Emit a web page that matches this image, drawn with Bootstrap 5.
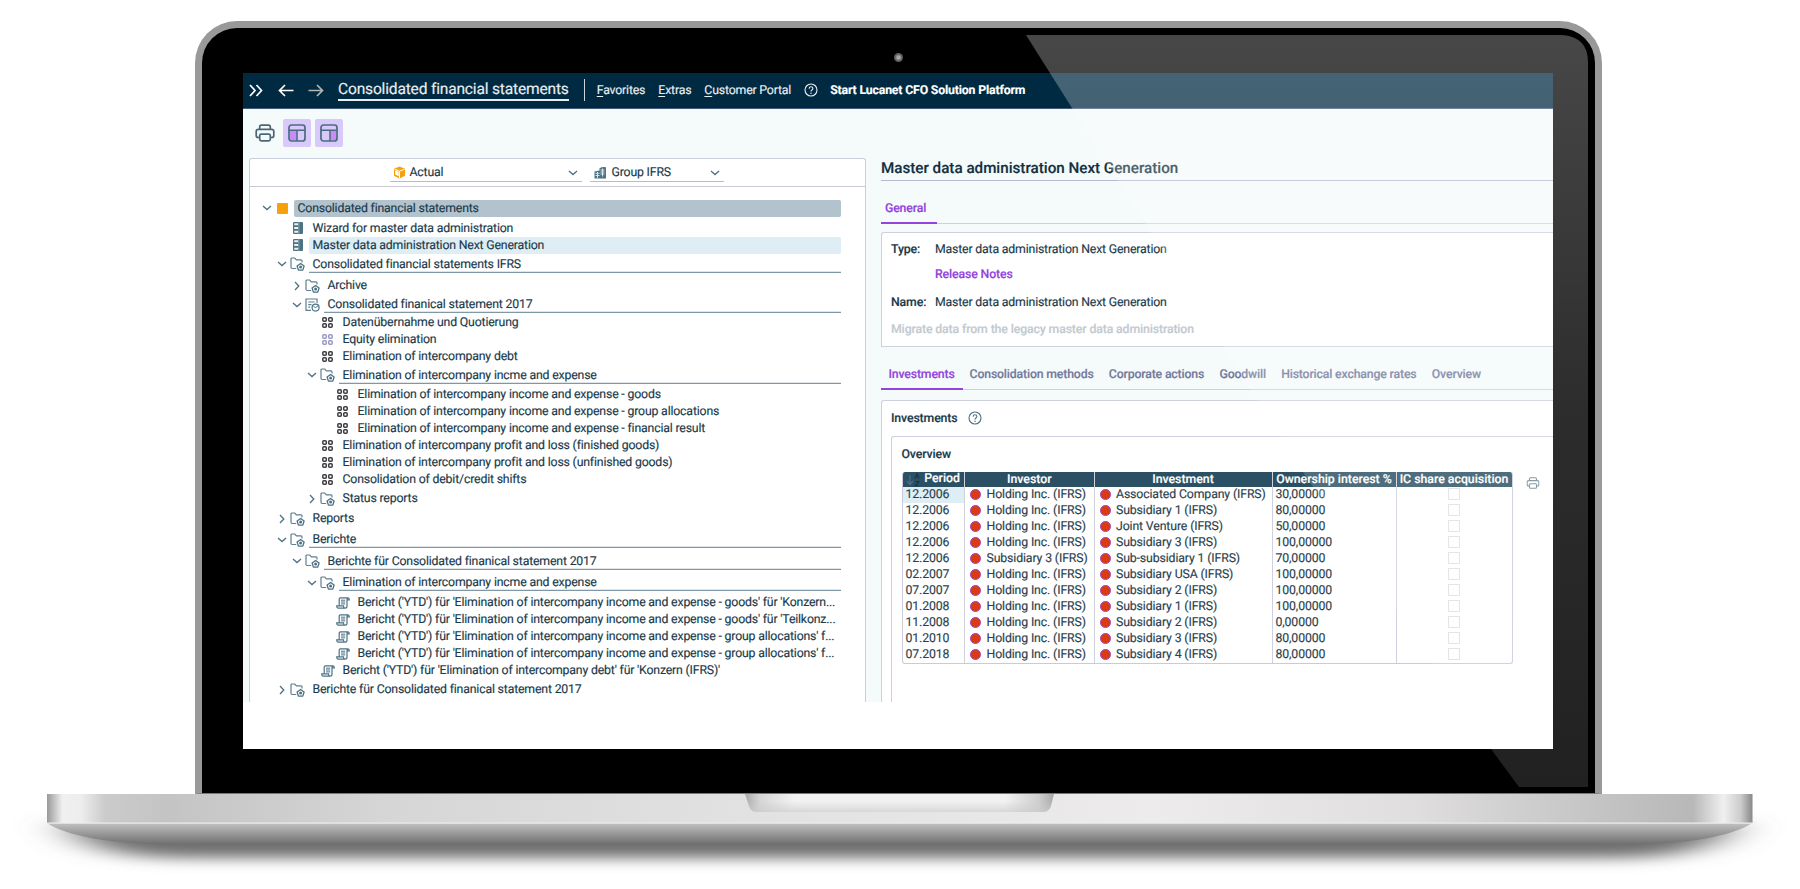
<!DOCTYPE html>
<html lang="en">

<head>
  <meta charset="utf-8" />
  <meta name="viewport" content="width=device-width, initial-scale=1" />
  <title>Consolidated financial statements</title>

  <link href="https://cdn.jsdelivr.net/npm/bootstrap@5.3.0/dist/css/bootstrap.min.css" rel="stylesheet" />

  <style>
    body {
      width: 1800px;
      height: 889px;
      overflow: hidden;
      background: #fff;
      color: #1a3a4b;
      font-family: Roboto, "Liberation Sans", sans-serif;
      font-size: 12.3px;
      letter-spacing: -.175px;
      line-height: 17px;
      text-rendering: geometricPrecision;
      -webkit-text-stroke: .15px currentColor;
    }

    svg { display: block; flex: none; }

    /* laptop */
    .lid {
      width: 1407px;
      height: 773px;
      margin: 21px 0 0 195px;
      padding: 45px 41px 0 41px;
      border: 7px solid #999;
      border-bottom: 1px solid #777;
      border-radius: 42px 42px 0 0;
      background: #000;
    }
    .webcam {
      left: 692px;
      top: 25px;
      width: 9px;
      height: 9px;
      border-radius: 50%;
      background: radial-gradient(#aaa 0 20%, #666 50%, #444);
    }
    .glare { left: 0; top: 0; pointer-events: none; }
    .screen { width: 1310px; height: 676px; background: #fff; overflow: hidden; }
    .app { height: 629px; background: #f5fafb; overflow: hidden; }

    /* top bar */
    .topbar { height: 35.5px; padding-left: 6px; background: #002a42; border-bottom: 1px solid #44597a; color: #e9eef2; }
    .topbar .app-title { font-size: 15.55px; line-height: 19px; border-bottom: 2px solid #e9eef2; margin: 0 0 0 14px; white-space: nowrap; }
    .topbar .sep { width: 1px; height: 22px; margin: 0 12px 0 15px; background: #cdd5da; }
    .topbar a { color: inherit; text-decoration: none; white-space: nowrap; margin-right: 13px; padding-top: 2px; }
    .topbar u { text-underline-offset: 2px; }

    .tools { height: 49px; padding: 10.5px 0 0 11.5px; }
    .tool-on { width: 28.3px; height: 28px; border-radius: 2px; background: #d9c8fa; margin-right: 4px; }

    /* tree panel */
    .tree-panel { width: 617px; height: 545px; margin-left: 6px; border: 1px solid #c9cfdd; border-bottom: 0; border-radius: 3px 3px 0 0; background: #fff; }
    .selectors { height: 28.5px; padding-left: 139.5px; border-bottom: 1px solid #c9c9d6; }
    .picker { height: 23px; padding: 6.5px 4px 0 3px; border-bottom: 1px solid #b9b9cf; }
    .picker span { line-height: 18px; padding-top: 1px; }
    .tree { padding: 12.5px 24px 0 11px; }
    .tree-row { height: 17px; }
    .tree-row .twist { width: 12px; flex: none; }
    .tree-row .kind { width: 21px; padding-right: 2px; flex: none; }
    .tree-row .caption { flex: 1; min-width: 0; height: 17px; line-height: 18px; padding-left: 3.5px; white-space: nowrap; border-radius: 2px; }
    .caption.root { background: #b2c3cd; }
    .caption.picked { background: #dfeef4; }
    .caption.open { border-radius: 0; box-shadow: inset 0 -1.3px 0 #7f98a8; }

    /* detail */
    .detail { width: 672px; margin-left: 15px; }
    .detail h1 { font-size: 15.2px; letter-spacing: 0; font-weight: 500; line-height: 20px; height: 23.5px; margin: 0; border-bottom: 1.5px solid #b9b9cf; color: #12303f; }
    .tabs { border-bottom: 1px solid #cfd2de; font-weight: 500; letter-spacing: -.17px; color: #737a9c; }
    .tabs span { white-space: nowrap; padding-right: 15.3px; }
    .tabs .on { color: #9344dd; border-bottom: 2px solid #9344dd; margin-bottom: -1px; }
    .frame { background: #fff; border: 1px solid #cdd1de; border-right: 0; border-radius: 3px 0 0 0; }
    .med { font-weight: 500; letter-spacing: -.13px; }

    .grid-table { width: 611px; font-size: 12.3px; letter-spacing: -.13px; line-height: 17px; border: 1px solid #c9cbdc; border-top: 0; border-radius: 3px; overflow: hidden; color: #2c3f4d; }
    .grid-table .cells { display: grid; grid-template-columns: 62.5px 129.5px 178px 124px 1fr; height: 16px; }
    .grid-table .cells>div { height: 16px; border-right: 1px solid #cfd1de; padding: .7px 0 0 3px; white-space: nowrap; }
    .grid-table .cells>div:last-child { border-right: 0; padding: 0; }
    .grid-table .heads { height: 15px; line-height: 17px; background: #2b5064; color: #fff; font-weight: 500; text-align: center; letter-spacing: 0; }
    .grid-table .heads>div { padding: 0 !important; }
    .grid-table .heads>.sorted { padding-right: 4px !important; }
    .first-cell { background: #dfeef4; }
    .dot { display: inline-block; width: 11px; height: 11px; margin: 0 5.5px 0 2px; border: 1px solid #a343c0; border-radius: 50%; background: #dc3a10; vertical-align: -2px; }
    .tick { width: 12px; height: 12px; margin: 1px 0 0 51px; border: 1px solid #dfe0e3; }
  </style>
</head>

<body>

  <svg width="0" height="0" class="position-absolute">
    <defs>
      <symbol id="i-down" viewBox="0 0 10 6"><path d="M1 1l4 3.6L9 1" fill="none" stroke="#4d7284" stroke-width="1.3" /></symbol>
      <symbol id="i-right" viewBox="0 0 6 10"><path d="M1 1l3.8 4L1 9" fill="none" stroke="#4d7284" stroke-width="1.3" /></symbol>
      <symbol id="i-folder" viewBox="0 0 15 14">
        <path d="M6.2 11.5H2.2Q1 11.5 1 10.3V2Q1 1 2 1H4.7L6.4 2.8H11Q12 2.8 12 3.8V5.6" fill="none" stroke="#5d7f8f" stroke-width="1.2" />
        <path d="M10.6 6.5L14.1 9L12.8 13.1H8.4L7.1 9z" fill="#fff" stroke="#4d7284" stroke-width="1.3" stroke-linejoin="round" />
        <circle cx="10.6" cy="10.1" r="1.5" fill="#4d7284" />
      </symbol>
      <symbol id="i-report" viewBox="0 0 15 14">
        <path d="M6 12.4H1V1H12V5M3.3 4H9.6M3.3 6.6H6.5M3.3 9.2H5.2" fill="none" stroke="#5d7f8f" stroke-width="1.2" />
        <circle cx="10.6" cy="9.6" r="3.5" fill="#fff" stroke="#4d7284" stroke-width="1.2" />
        <path d="M10.6 9.6L13 7.8M10.6 9.6L8.5 8.5" fill="none" stroke="#4d7284" />
      </symbol>
      <symbol id="i-server" viewBox="0 0 10 12">
        <rect x="0" y="0" width="10" height="12" rx="1" fill="#4d7284" />
        <path d="M1.2 1.3H5.2V3.2H1.2zM1.2 5H5.2V7H1.2zM1.2 8.8H5.2V10.7H1.2z" fill="#e9f0f3" />
        <path d="M5.9 0V12" stroke="#a9bcc6" stroke-width=".6" />
      </symbol>
      <symbol id="i-quad" viewBox="0 0 11 11">
        <g fill="none" stroke="currentColor" stroke-width="1.5">
          <rect x=".8" y=".8" width="3.5" height="3.5" rx="1" /><rect x="6.7" y=".8" width="3.5" height="3.5" rx="1" />
          <rect x=".8" y="6.7" width="3.5" height="3.5" rx="1" /><rect x="6.7" y="6.7" width="3.5" height="3.5" rx="1" />
        </g>
      </symbol>
      <symbol id="i-scroll" viewBox="0 0 14 12">
        <path d="M3.2 8.3V2Q3.2.8 4.4.8H12Q13.3.8 13.3 2.8H11V9.3Q11 11.2 9 11.2H2Q.8 11.2.7 8.9H7.5Q7.5 11 9 11.2M11 2.8Q11 1 12 .8" fill="none" stroke="#4d7284" stroke-width="1.2" />
        <path d="M5 3.2H9.2M5 5H9.2M5 6.9H9.2" stroke="#4d7284" stroke-width="1" />
      </symbol>
      <symbol id="i-print" viewBox="0 0 20 18">
        <g fill="none" stroke="currentColor" stroke-width="1.7">
          <path d="M4.7 5.4V3Q4.7 1.1 6.5 1.1H13.5Q15.3 1.1 15.3 3V5.4" />
          <path d="M4.7 13.5H3.2Q1.2 13.5 1.2 11.5V7.6Q1.2 5.4 3.4 5.4H16.6Q18.8 5.4 18.8 7.6V11.5Q18.8 13.5 16.8 13.5H15.3" />
          <path d="M6.3 10.1H13.7Q15.3 10.1 15.3 11.5V15.2Q15.3 16.8 13.7 16.8H6.3Q4.7 16.8 4.7 15.2V11.5Q4.7 10.1 6.3 10.1z" />
        </g>
      </symbol>
      <symbol id="i-help" viewBox="0 0 14 14">
        <circle cx="7" cy="7" r="6" fill="none" stroke="currentColor" stroke-width="1.1" />
        <path d="M5.1 5.7Q5.2 3.8 7 3.8T8.9 5.5Q8.9 6.4 7.9 7T7 8.5" fill="none" stroke="currentColor" stroke-width="1.1" />
        <circle cx="7" cy="10.2" r=".75" fill="currentColor" />
      </symbol>
    </defs>
  </svg>

  <div class="lid position-relative">
    <div class="webcam position-absolute"></div>
    <div class="screen">
      <div class="app">
        <nav class="topbar d-flex align-items-center">
          <svg width="14" height="13" viewBox="0 0 14 13"><path d="M1 1l5 5.5L1 12M7.5 1l5 5.5L7.5 12" fill="none" stroke="#fff" stroke-width="1.7" /></svg>
          <svg width="16" height="13" viewBox="0 0 16 13" style="margin-left:15px"><path d="M15.5 6.5H1.5M7 1L1.5 6.5 7 12" fill="none" stroke="#fff" stroke-width="1.7" /></svg>
          <svg width="16" height="13" viewBox="0 0 16 13" style="margin-left:14px"><path d="M.5 6.5H14.5M9 1l5.5 5.5L9 12" fill="none" stroke="#b4b7b4" stroke-width="1.7" /></svg>
          <div class="app-title">Consolidated financial statements</div>
          <div class="sep"></div>
          <a href="#"><u>F</u>avorites</a>
          <a href="#"><u>E</u>xtras</a>
          <a href="#"><u>C</u>ustomer Portal</a>
          <svg width="14" height="14"><use href="#i-help" /></svg>
          <a href="#" class="fw-bold text-white ms-2 ps-1">Start Lucanet CFO Solution Platform</a>
        </nav>

        <div class="tools d-flex">
          <svg width="20" height="18" style="color:#4a6778;margin:5px 8px 0 0"><use href="#i-print" /></svg>
          <div class="tool-on d-flex align-items-center justify-content-center">
            <svg width="18" height="18" viewBox="0 0 18 18"><path d="M2 7H9V16H2z" fill="#c98cf7" /><rect x="1" y="1" width="16" height="16" rx="2.5" fill="none" stroke="#4a6b80" stroke-width="1.7" /><path d="M1 6.3H17M9 6.3V17" stroke="#4a6b80" stroke-width="1.5" /></svg>
          </div>
          <div class="tool-on d-flex align-items-center justify-content-center">
            <svg width="18" height="18" viewBox="0 0 18 18"><path d="M10 7H16V16H10z" fill="#c98cf7" /><rect x="1" y="1" width="16" height="16" rx="2.5" fill="none" stroke="#4a6b80" stroke-width="1.7" /><path d="M1 6.3H17M10 6.3V17" stroke="#4a6b80" stroke-width="1.5" /></svg>
          </div>
        </div>

        <div class="d-flex">
          <section class="tree-panel">
            <div class="selectors d-flex gap-2">
              <div class="picker d-flex align-items-center" style="width:192px">
                <svg width="13" height="13" viewBox="0 0 13 13"><path d="M6.5.5l5.5 2.3v7L6.5 12.5 1 9.8v-7z" fill="#f7a10a" /><path d="M1.5 3.2l5 2 5-2M6.5 5.2V12" fill="none" stroke="#fff" /><path d="M2.2 4.3l3.5 1.5v4.5L2.2 8.6z" fill="#fff" /></svg>
                <span class="ms-1">Actual</span>
                <svg class="ms-auto" width="10" height="6"><use href="#i-down" /></svg>
              </div>
              <div class="picker d-flex align-items-center ps-1" style="width:134px">
                <svg width="13" height="13" viewBox="0 0 13 13"><path d="M.5 5.5L5.5 4.500V2.300Q8.500.3 12 1.300V12.500H.5z" fill="#4d7284" /><path d="M1.5 7.3H5.5M1.500 9.5H5.500M3.500 6V12M8.500 2.500V10.500M6.500 4H10.500M6.500 6H10.500M6.500 8H10.500" stroke="#e3ecf0" stroke-width=".9" /></svg>
                <span style="margin-left:5px">Group IFRS</span>
                <svg class="ms-auto" width="10" height="6"><use href="#i-down" /></svg>
              </div>
            </div>
            <div class="tree" id="tree"></div>
          </section>

          <section class="detail">
            <h1>Master data administration Next Generation</h1>
            <div class="tabs d-flex" style="height:42.5px;padding-top:20px"><span class="on" style="padding:0 11px 0 4px">General</span></div>

            <div class="frame" style="height:115px;margin-top:8px;padding:9px 0 0 9px">
              <div class="d-flex"><span class="med" style="width:44px">Type:</span>Master data administration Next Generation</div>
              <div class="med" style="margin:8.5px 0 0 44px;color:#9344dd">Release Notes</div>
              <div class="d-flex" style="margin-top:10.5px"><span class="med" style="width:44px">Name:</span>Master data administration Next Generation</div>
              <div class="med" style="margin-top:10px;color:#c3cad1">Migrate data from the legacy master data administration</div>
            </div>

            <div class="tabs d-flex" style="height:43.5px;padding-top:20px">
              <span class="on" style="padding:0 8px 0 7.5px;margin-right:7px">Investments</span><span>Consolidation methods</span><span>Corporate actions</span><span>Goodwill</span><span>Historical exchange rates</span><span>Overview</span>
            </div>

            <div class="frame" style="height:320px;margin-top:10px;padding:9.5px 0 0 9px">
              <div class="d-flex align-items-center med">Investments<svg width="14" height="14" style="margin:-2px 0 0 10px;color:#4d7284"><use href="#i-help" /></svg></div>
              <div class="frame" style="height:300px;margin-top:8px;padding:10px 0 0 9.5px">
                <div class="med">Overview</div>
                <div class="d-flex" style="margin-top:8px">
                  <div class="grid-table" id="grid">
                    <div class="cells heads">
                      <div class="sorted d-flex justify-content-end align-items-center">
                        <svg width="14" height="14" viewBox="0 0 14 14" class="me-1"><path d="M4 2V11M1 8l3 3.5L7 8" fill="none" stroke="#4f6f80" stroke-width="1.2" /><path d="M9 5.5L11 .5l2 5M9.5 4H12.5M9 8.5H13L9 13H13" fill="none" stroke="#153748" stroke-width="1.2" /></svg>Period
                      </div>
                      <div>Investor</div>
                      <div>Investment</div>
                      <div>Ownership interest %</div>
                      <div>IC share acquisition</div>
                    </div>
                  </div>
                  <svg width="14" height="12" viewBox="0 0 20 18" style="margin:5px 0 0 13px;color:#6f8996"><use href="#i-print" /></svg>
                </div>
              </div>
            </div>
          </section>
        </div>
      </div>
    </div>

    <!-- diagonal reflection across the glass -->
    <svg class="glare position-absolute" width="1393" height="765" viewBox="202 28 1393 765">
      <defs>
        <linearGradient id="shine" x1="0" y1="0" x2="0" y2="1">
          <stop offset="0" stop-color="#fff" stop-opacity=".28" />
          <stop offset=".5" stop-color="#fff" stop-opacity=".175" />
          <stop offset="1" stop-color="#fff" stop-opacity=".13" />
        </linearGradient>
      </defs>
      <path d="M1026 35H1562Q1588 37 1588 62V787H1519L1491 749L1303 472L1072 108z" fill="url(#shine)" />
    </svg>
  </div>

  <svg width="1800" height="95" viewBox="0 794 1800 95">
    <defs>
      <linearGradient id="deck" x1="0" y1="0" x2="1" y2="0">
        <stop offset="0" stop-color="#999" />
        <stop offset=".009" stop-color="#f0f0f0" />
        <stop offset=".02" stop-color="#ededed" />
        <stop offset=".034" stop-color="#cbcbcb" />
        <stop offset=".07" stop-color="#c4c4c4" />
        <stop offset=".2" stop-color="#d6d6d6" />
        <stop offset=".4" stop-color="#e1e1e1" />
        <stop offset=".65" stop-color="#edebec" />
        <stop offset=".8" stop-color="#e0dede" />
        <stop offset=".91" stop-color="#c4c4c4" />
        <stop offset=".965" stop-color="#b8b8b8" />
        <stop offset=".983" stop-color="#f0f0f0" />
        <stop offset=".993" stop-color="#ccc" />
        <stop offset="1" stop-color="#888" />
      </linearGradient>
      <linearGradient id="belly" x1="0" y1="0" x2="0" y2="1">
        <stop offset="0" stop-color="#c2c2c2" />
        <stop offset="1" stop-color="#707070" />
      </linearGradient>
      <linearGradient id="notch" x1="0" y1="0" x2="1" y2="0">
        <stop offset="0" stop-color="#aaa" />
        <stop offset=".05" stop-color="#d6d6d6" />
        <stop offset=".16" stop-color="#f2f2f2" />
        <stop offset=".84" stop-color="#f2f2f2" />
        <stop offset=".95" stop-color="#cfcfcf" />
        <stop offset="1" stop-color="#aaa" />
      </linearGradient>
      <linearGradient id="notch-fade" x1="0" y1="0" x2="0" y2="1">
        <stop offset=".4" stop-color="#ccc" stop-opacity="0" />
        <stop offset="1" stop-color="#ccc" stop-opacity=".7" />
      </linearGradient>
      <filter id="soft" x="-10%" y="-100%" width="120%" height="300%"><feGaussianBlur stdDeviation="26 7" /></filter>
    </defs>
    <path d="M70 822H1730Q1720 857 1620 858H180Q80 857 70 822z" fill="#6e6e6e" filter="url(#soft)" />
    <path d="M47 823H1752C1732 836 1690 844 1630 844H170C110 844 67 836 47 823z" fill="url(#belly)" />
    <rect x="47" y="794" width="1705.5" height="29" fill="url(#deck)" />
    <rect x="47" y="822.5" width="1705.5" height="1.2" fill="#eee" />
    <path d="M745 794H1054L1051 806Q1049 812 1042 812H757Q751 812 749 806z" fill="url(#notch)" />
    <path d="M745 794H1054L1051 806Q1049 812 1042 812H757Q751 812 749 806z" fill="url(#notch-fade)" />
  </svg>

  <script src="https://cdn.jsdelivr.net/npm/bootstrap@5.3.0/dist/js/bootstrap.bundle.min.js"></script>

  <script>
    // [level, icon, label, space above, arrow, caption class]
    const nodes = [
      [0, 'square', 'Consolidated financial statements', 0, 'down', 'root'],
      [1, 'server', 'Wizard for master data administration', 3],
      [1, 'server', 'Master data administration Next Generation', 0, '', 'picked'],
      [1, 'folder', 'Consolidated financial statements IFRS', 2, 'down', 'open'],
      [2, 'folder', 'Archive', 4.5, 'right'],
      [2, 'report', 'Consolidated finanical statement 2017', 2, 'down', 'open'],
      [3, 'quad', 'Datenübernahme und Quotierung', 1],
      [3, 'quad-soft', 'Equity elimination', 0],
      [3, 'quad', 'Elimination of intercompany debt', 0],
      [3, 'folder', 'Elimination of intercompany incme and expense', 1.5, 'down', 'open'],
      [4, 'quad', 'Elimination of intercompany income and expense - goods', 2.5],
      [4, 'quad', 'Elimination of intercompany income and expense - group allocations', 0],
      [4, 'quad', 'Elimination of intercompany income and expense - financial result', 0],
      [3, 'quad', 'Elimination of intercompany profit and loss (finished goods)', 0],
      [3, 'quad', 'Elimination of intercompany profit and loss (unfinished goods)', 0],
      [3, 'quad', 'Consolidation of debit/credit shifts', 0],
      [3, 'folder', 'Status reports', 2, 'right'],
      [1, 'folder', 'Reports', 3, 'right'],
      [1, 'folder', 'Berichte', 4, 'down', 'open'],
      [2, 'folder', 'Berichte für Consolidated finanical statement 2017', 4.5, 'down', 'open'],
      [3, 'folder', 'Elimination of intercompany incme and expense', 4.5, 'down', 'open'],
      [4, 'scroll', "Bericht ('YTD') für 'Elimination of intercompany income and expense - goods' für 'Konzern...", 3],
      [4, 'scroll', "Bericht ('YTD') für 'Elimination of intercompany income and expense - goods' für 'Teilkonz...", 0],
      [4, 'scroll', "Bericht ('YTD') für 'Elimination of intercompany income and expense - group allocations' f...", 0],
      [4, 'scroll', "Bericht ('YTD') für 'Elimination of intercompany income and expense - group allocations' f...", 0],
      [3, 'scroll', "Bericht ('YTD') für 'Elimination of intercompany debt' für 'Konzern (IFRS)'", 0],
      [1, 'folder', 'Berichte für Consolidated finanical statement 2017', 2, 'right'],
    ];

    const use = (id, w, h, color = '#3d3d42') => `<svg width="${w}" height="${h}" style="color:${color}"><use href="#i-${id}"/></svg>`;
    const icons = {
      square: '<svg width="11" height="11"><rect width="11" height="11" rx="1" fill="#f7a10a"/></svg>',
      server: use('server', 10, 12),
      folder: use('folder', 15, 14),
      report: use('report', 15, 14),
      quad: use('quad', 11, 11),
      'quad-soft': use('quad', 11, 11, '#9a9ac6'),
      scroll: use('scroll', 14, 12),
    };
    const arrows = { down: use('down', 10, 6), right: use('right', 6, 10) };

    document.getElementById('tree').innerHTML = nodes.map(([level, icon, label, gap, arrow, cls]) => `
      <div class="tree-row d-flex align-items-center" style="margin-top:${gap}px;padding-left:${level * 15}px">
        <div class="twist d-flex justify-content-center">${arrow ? arrows[arrow] : ''}</div>
        <div class="kind d-flex justify-content-center">${icons[icon]}</div>
        <div class="caption ${cls || ''}">${label}</div>
      </div>`).join('');

    const holdings = [
      ['12.2006', 'Holding Inc.', 'Associated Company', '30,00000'],
      ['12.2006', 'Holding Inc.', 'Subsidiary 1', '80,00000'],
      ['12.2006', 'Holding Inc.', 'Joint Venture', '50,00000'],
      ['12.2006', 'Holding Inc.', 'Subsidiary 3', '100,00000'],
      ['12.2006', 'Subsidiary 3', 'Sub-subsidiary 1', '70,00000'],
      ['02.2007', 'Holding Inc.', 'Subsidiary USA', '100,00000'],
      ['07.2007', 'Holding Inc.', 'Subsidiary 2', '100,00000'],
      ['01.2008', 'Holding Inc.', 'Subsidiary 1', '100,00000'],
      ['11.2008', 'Holding Inc.', 'Subsidiary 2', '0,00000'],
      ['01.2010', 'Holding Inc.', 'Subsidiary 3', '80,00000'],
      ['07.2018', 'Holding Inc.', 'Subsidiary 4', '80,00000'],
    ];

    document.getElementById('grid').insertAdjacentHTML('beforeend', holdings.map(([period, investor, target, share], i) => `
      <div class="cells">
        <div class="${i ? '' : 'first-cell'}">${period}</div>
        <div><i class="dot"></i>${investor} (IFRS)</div>
        <div><i class="dot"></i>${target} (IFRS)</div>
        <div>${share}</div>
        <div><div class="tick"></div></div>
      </div>`).join(''));
  </script>
</body>

</html>
